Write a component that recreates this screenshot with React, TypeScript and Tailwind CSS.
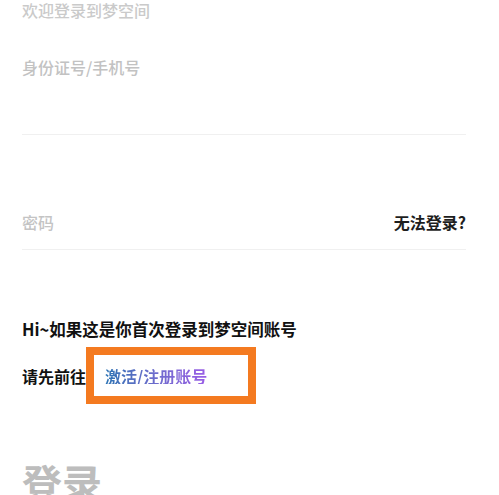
export default function App() {
  return (
    <div
      className="w-[499px] h-[495px] overflow-hidden bg-white pl-[22px] pr-[33px]"
      style={{ fontFamily: '"Noto Sans CJK SC", "Noto Sans", sans-serif' }}
    >
      <p className="mt-[2px] text-[16px] leading-4 font-medium text-[#cacaca]">欢迎登录到梦空间</p>

      <div className="mt-[41px] h-[76px] border-b border-[#f0f0f0] text-[16px] leading-4 font-medium text-[#c2c2c2]">
        身份证号/手机号
      </div>

      <div className="flex h-[115px] items-start justify-between border-b border-[#f0f0f0] pt-[79px] text-[16px] leading-4">
        <span className="font-medium text-[#c4c4c4]">密码</span>
        <span className="font-bold text-[#1e1e1e]">无法登录?</span>
      </div>

      <p className="mt-[71px] text-[16.5px] leading-[17px] font-bold text-[#111]">
        Hi~如果这是你首次登录到梦空间账号
      </p>

      <div className="mt-[9px] flex items-center">
        <span className="text-[16px] leading-4 font-bold text-[#111]">请先前往</span>
        <div className="flex h-[57px] w-[170px] items-center border-[8px] border-[#f47a20] pl-[11px]">
          <span className="bg-gradient-to-r from-[#2a73b4] to-[#9a5ee6] bg-clip-text text-[16px] leading-4 font-bold text-transparent">
            激活/注册账号
          </span>
        </div>
      </div>

      <p className="mt-[58px] text-[40px] leading-10 font-bold text-[#bdbdbd]">登录</p>
    </div>
  );
}
